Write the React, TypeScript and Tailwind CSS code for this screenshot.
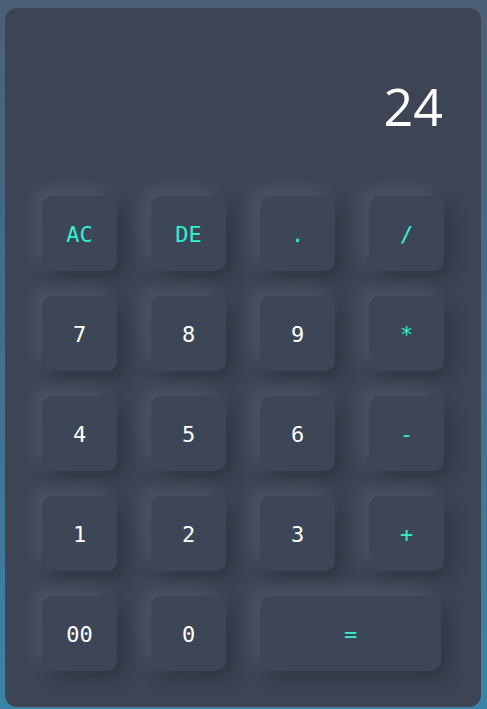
import React, { useState } from "react";

const keys = [
  { label: "AC", accent: true },
  { label: "DE", accent: true },
  { label: ".", accent: true },
  { label: "/", accent: true },
  { label: "7" },
  { label: "8" },
  { label: "9" },
  { label: "*", accent: true },
  { label: "4" },
  { label: "5" },
  { label: "6" },
  { label: "-", accent: true },
  { label: "1" },
  { label: "2" },
  { label: "3" },
  { label: "+", accent: true },
  { label: "00" },
  { label: "0" },
  { label: "=", accent: true, wide: true },
];

export default function App() {
  const [value] = useState("24");

  return (
    <div className="min-h-screen bg-[linear-gradient(180deg,#4a6076_0%,#417290_60%,#3b84a8_100%)] pl-[5px] pr-[6px] pt-[8px] pb-[2px]">
      <div className="h-[699px] rounded-[12px] bg-[#3d4555] px-[37px] pb-[36px]">
        <div className="flex h-[188px] items-start justify-end pr-[1px] pt-[70px]">
          <span className="font-['Open_Sans','Noto_Sans',sans-serif] text-[52px] leading-[56px] text-white">
            {value}
          </span>
        </div>
        <div className="grid grid-cols-[repeat(4,75px)] auto-rows-[75px] gap-x-[34px] gap-y-[25px]">
          {keys.map((k) => (
            <button
              key={k.label}
              className={`flex items-center justify-center rounded-[10px] bg-[#3d4656] pt-[2px] font-['DejaVu_Sans_Mono',monospace] text-[22px] shadow-[-8px_-8px_18px_rgba(255,255,255,0.09),8px_8px_18px_rgba(0,0,0,0.24)] ${
                k.accent ? "text-[#33f0cf]" : "text-white"
              } ${k.wide ? "col-span-2 mr-[3px]" : ""}`}
            >
              {k.label}
            </button>
          ))}
        </div>
      </div>
    </div>
  );
}
